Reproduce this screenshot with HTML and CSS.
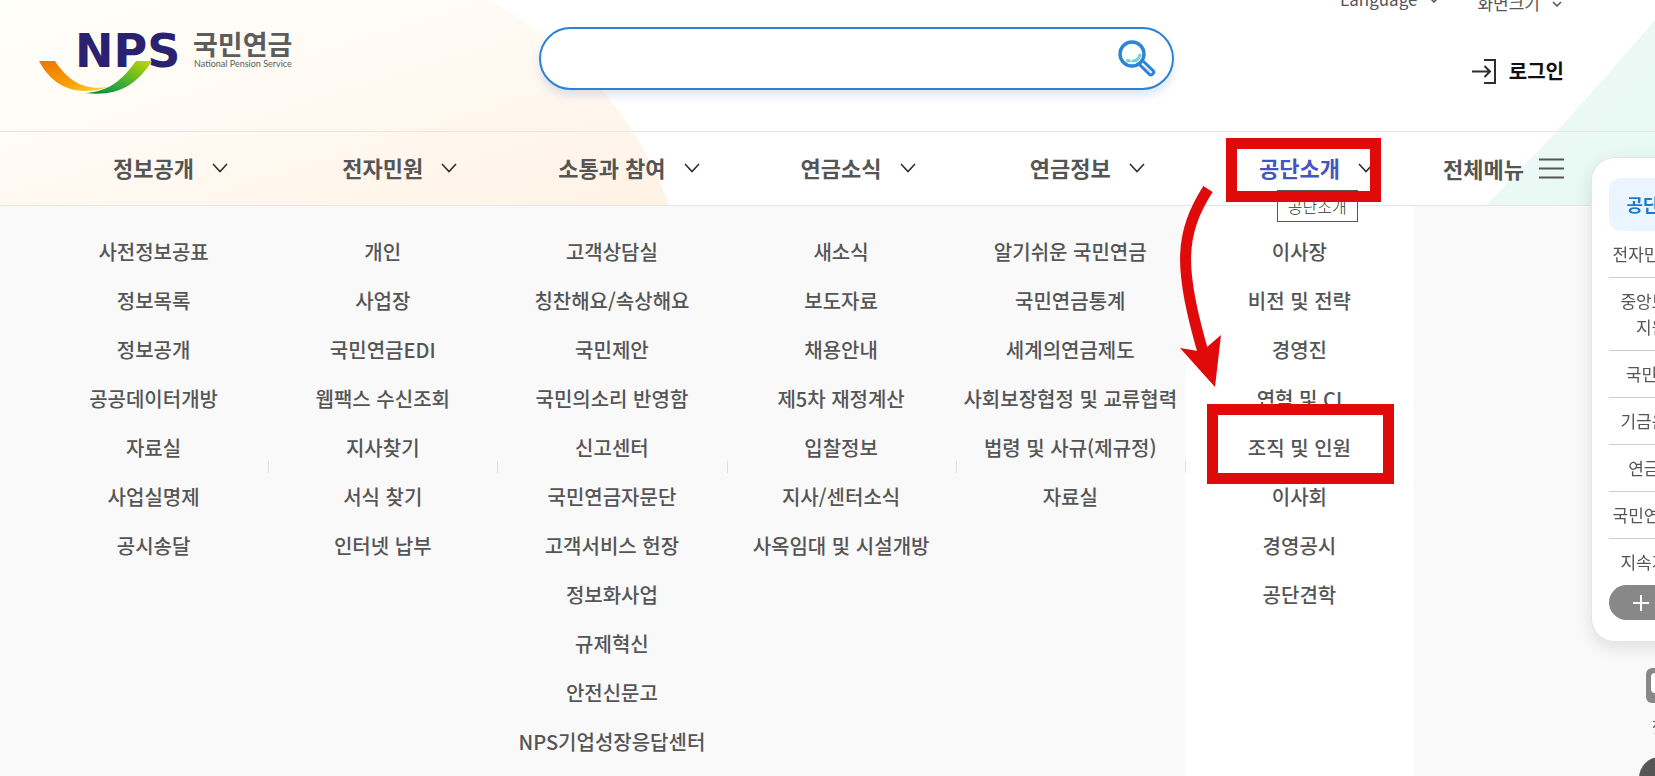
FILE: index.html
```html
<!DOCTYPE html>
<html lang="ko">
<head>
<meta charset="UTF-8" />
<meta name="viewport" content="width=device-width, initial-scale=1" />
<title>국민연금</title>
<link rel="stylesheet" href="styles.css">
</head>
<body>

<svg class="bg bg-left" width="700" height="205" viewBox="0 0 700 205" aria-hidden="true">
  <defs>
    <linearGradient id="warm" x1="0" y1="0" x2="1" y2="1">
      <stop offset="0" stop-color="#fffffa" />
      <stop offset="0.45" stop-color="#fffaf3" />
      <stop offset="1" stop-color="#fff2e5" />
    </linearGradient>
  </defs>
  <path d="M0 0H488A375 375 0 0 1 669 205H0Z" fill="url(#warm)" />
</svg>
<svg class="bg bg-right" width="170" height="205" viewBox="0 0 170 205" aria-hidden="true">
  <defs>
    <linearGradient id="mint" x1="0" y1="0" x2="1" y2="1">
      <stop offset="0" stop-color="#f3fbf8" />
      <stop offset="1" stop-color="#e4f8f1" />
    </linearGradient>
  </defs>
  <path d="M170 20Q118 80 72 131Q34 171 1 205H170Z" fill="url(#mint)" />
</svg>

<header class="header">
  <div class="header-inner">
    <a class="logo" href="#" aria-label="국민연금">
      <svg width="260" height="68" viewBox="0 0 260 68">
        <defs>
          <linearGradient id="orange" x1="0" y1="0" x2="1" y2="1">
            <stop offset="0" stop-color="#ee7203" />
            <stop offset="0.6" stop-color="#f9a100" />
            <stop offset="1" stop-color="#ffd24a" />
          </linearGradient>
          <linearGradient id="green" x1="0" y1="1" x2="1" y2="0">
            <stop offset="0" stop-color="#00863d" />
            <stop offset="0.4" stop-color="#35ab3a" />
            <stop offset="1" stop-color="#c5d800" />
          </linearGradient>
        </defs>
        <text class="logo-nps" x="36" y="40">NPS</text>
        <path d="M0 34H16C28 52 43 64 69 60C45 68 17 66 0 34Z" fill="url(#orange)" />
        <path d="M46 66C70 65 84 52 97 34H113C98 57 80 70 46 66Z" fill="url(#green)" />
        <text class="logo-ko" x="154" y="28">국민연금</text>
        <text class="logo-en" x="155" y="40">National Pension Service</text>
      </svg>
    </a>

    <form class="search" role="search">
      <input type="search" aria-label="검색어">
      <button type="submit" aria-label="검색">
        <svg width="38" height="38" viewBox="0 0 38 38" fill="none">
          <circle cx="14" cy="14" r="12" stroke="#2b84d8" stroke-width="3.4" />
          <path d="M22 15C21 18.500 18.500 20.800 15 21M11.500 21L9.500 20.500" stroke="#74d3d2" stroke-width="3" stroke-linecap="round" />
          <path d="M21.500 24.500L31.500 34.500Q33 35.500 34.300 34.300L35.300 33.200Q36.500 32 35.300 30.800L25 21" stroke="#2b84d8" stroke-width="3" stroke-linejoin="round" />
          <path d="M27 27L32.500 32.500" stroke="#b4d6f4" stroke-width="1" />
        </svg>
      </button>
    </form>

    <div class="member">
      <div class="util">
        <button class="util-lang" type="button">Language
          <svg width="10" height="6" viewBox="0 0 10 6"><path d="M1 1L5 5L9 1" /></svg>
        </button>
        <button type="button">화면크기
          <svg width="10" height="6" viewBox="0 0 10 6"><path d="M1 1L5 5L9 1" /></svg>
        </button>
      </div>
      <a class="login" href="#">
        <svg width="25" height="25" viewBox="0 0 25 25" fill="none" stroke="#2e2e2e" stroke-width="2">
          <path d="M12 1H23V24H12M0 12.500H18M12.500 7L18 12.500L12.500 18" />
        </svg>
        로그인
      </a>
    </div>
  </div>
</header>

<nav class="gnb" aria-label="주메뉴">
  <ul class="gnb-list">
    <li><a href="#">정보공개</a><svg class="chevron" width="16" height="10" viewBox="0 0 16 10"><path d="M1 1L8 8.500L15 1" /></svg></li>
    <li><a href="#">전자민원</a><svg class="chevron" width="16" height="10" viewBox="0 0 16 10"><path d="M1 1L8 8.500L15 1" /></svg></li>
    <li><a href="#">소통과 참여</a><svg class="chevron" width="16" height="10" viewBox="0 0 16 10"><path d="M1 1L8 8.500L15 1" /></svg></li>
    <li><a href="#">연금소식</a><svg class="chevron" width="16" height="10" viewBox="0 0 16 10"><path d="M1 1L8 8.500L15 1" /></svg></li>
    <li><a href="#">연금정보</a><svg class="chevron" width="16" height="10" viewBox="0 0 16 10"><path d="M1 1L8 8.500L15 1" /></svg></li>
    <li class="active">
      <a href="#">공단소개</a><svg class="chevron" width="16" height="10" viewBox="0 0 16 10"><path d="M1 1L8 8.500L15 1" /></svg>
      <span class="tooltip" role="tooltip">공단소개</span>
      <span class="mark mark-menu"></span>
    </li>
  </ul>
  <button class="all-menu" type="button">전체메뉴
    <svg width="25" height="21" viewBox="0 0 25 21"><path d="M0 1.500H25M0 10.500H25M0 19.500H25" /></svg>
  </button>
</nav>

<div class="mega">
  <ul>
    <li><a href="#">사전정보공표</a></li>
    <li><a href="#">정보목록</a></li>
    <li><a href="#">정보공개</a></li>
    <li><a href="#">공공데이터개방</a></li>
    <li><a href="#">자료실</a></li>
    <li><a href="#">사업실명제</a></li>
    <li><a href="#">공시송달</a></li>
  </ul>
  <ul>
    <li><a href="#">개인</a></li>
    <li><a href="#">사업장</a></li>
    <li><a href="#">국민연금EDI</a></li>
    <li><a href="#">웹팩스 수신조회</a></li>
    <li><a href="#">지사찾기</a></li>
    <li><a href="#">서식 찾기</a></li>
    <li><a href="#">인터넷 납부</a></li>
  </ul>
  <ul>
    <li><a href="#">고객상담실</a></li>
    <li><a href="#">칭찬해요/속상해요</a></li>
    <li><a href="#">국민제안</a></li>
    <li><a href="#">국민의소리 반영함</a></li>
    <li><a href="#">신고센터</a></li>
    <li><a href="#">국민연금자문단</a></li>
    <li><a href="#">고객서비스 헌장</a></li>
    <li><a href="#">정보화사업</a></li>
    <li><a href="#">규제혁신</a></li>
    <li><a href="#">안전신문고</a></li>
    <li><a href="#">NPS기업성장응답센터</a></li>
  </ul>
  <ul>
    <li><a href="#">새소식</a></li>
    <li><a href="#">보도자료</a></li>
    <li><a href="#">채용안내</a></li>
    <li><a href="#">제5차 재정계산</a></li>
    <li><a href="#">입찰정보</a></li>
    <li><a href="#">지사/센터소식</a></li>
    <li><a href="#">사옥임대 및 시설개방</a></li>
  </ul>
  <ul>
    <li><a href="#">알기쉬운 국민연금</a></li>
    <li><a href="#">국민연금통계</a></li>
    <li><a href="#">세계의연금제도</a></li>
    <li><a href="#">사회보장협정 및 교류협력</a></li>
    <li><a href="#">법령 및 사규(제규정)</a></li>
    <li><a href="#">자료실</a></li>
  </ul>
  <ul class="current">
    <li><a href="#">이사장</a></li>
    <li><a href="#">비전 및 전략</a></li>
    <li><a href="#">경영진</a></li>
    <li><a href="#">연혁 및 CI</a></li>
    <li><a href="#">조직 및 인원</a><span class="mark mark-item"></span></li>
    <li><a href="#">이사회</a></li>
    <li><a href="#">경영공시</a></li>
    <li><a href="#">공단견학</a></li>
  </ul>
  <svg class="arrow" width="50" height="205" viewBox="0 0 50 205" aria-hidden="true">
    <path d="M33 4C5 48 3 82 28 167" fill="none" stroke="#e10a0a" stroke-width="11" />
    <path d="M5 163L23 166L32 162L46 150L40 202Z" fill="#e10a0a" />
  </svg>
</div>

<aside class="quick">
  <div class="quick-box">
    <a class="quick-title" href="#">공단소개</a>
    <ul>
      <li><a href="#">전자민원신고</a></li>
      <li><a href="#">중앙보조기<br>지원단</a></li>
      <li><a href="#">국민 참여</a></li>
      <li><a href="#">기금운용단</a></li>
      <li><a href="#">연금정보</a></li>
      <li><a href="#">국민연금공단</a></li>
      <li><a href="#">지속가능성</a></li>
    </ul>
    <button class="quick-more" type="button" aria-label="더보기">
      <svg width="16" height="16" viewBox="0 0 16 16"><path d="M8 0V16M0 8H16" /></svg>
    </button>
  </div>
  <a class="chatbot" href="#">
    <svg width="28" height="35" viewBox="0 0 28 35">
      <rect width="28" height="35" rx="6" fill="#888" />
      <rect x="5" y="5" width="18" height="20" rx="4" fill="#fff" />
    </svg>
    챗
  </a>
  <button class="go-top" type="button" aria-label="맨 위로"></button>
</aside>

</body>
</html>
```
FILE: styles.css
```css
* {
  box-sizing: border-box;
}
body {
  margin: 0;
  min-height: 100vh;
  display: flex;
  flex-direction: column;
  position: relative;
  overflow: hidden;
  background: #fff;
  color: #555;
  font-family: "Noto Sans CJK KR", "Noto Sans", sans-serif;
  font-size: 17px;
}
ul {
  list-style: none;
  margin: 0;
  padding: 0;
}
a {
  color: inherit;
  text-decoration: none;
}
button {
  border: none;
  background: none;
  padding: 0;
  font: inherit;
  color: inherit;
  cursor: pointer;
}
svg {
  display: block;
  flex-shrink: 0;
}

/* background shapes */
.bg {
  position: absolute;
  top: 0;
  z-index: -1;
}
.bg-left {
  left: 0;
}
.bg-right {
  right: 0;
}

/* header */
.header {
  border-bottom: 1px solid #e6e6e6;
}
.header-inner {
  display: grid;
  grid-template-columns: 500fr 635fr 390fr;
  align-items: start;
  padding: 27px 91px 41px 39px;
}
.logo {
  height: 63px;
}
.logo svg {
  overflow: visible;
}
.logo-nps {
  font-family: "DejaVu Sans", sans-serif;
  font-size: 46px;
  font-weight: 700;
  fill: #2b2171;
}
.logo-ko {
  font-size: 27px;
  font-weight: 700;
  fill: #5b5c5b;
}
.logo-en {
  font-family: Lato, sans-serif;
  font-size: 9px;
  fill: #5b5c5b;
}
.search {
  display: flex;
  align-items: center;
  height: 63px;
  padding: 0 16px 0 28px;
  border: 2px solid #2b82d6;
  border-radius: 32px;
  background: #fff;
  box-shadow: 0 6px 8px rgba(43, 100, 190, 0.15);
}
.search input {
  flex: 1;
  min-width: 0;
  height: 100%;
  border: none;
  outline: none;
  background: none;
  font: inherit;
}
.member {
  display: flex;
  flex-direction: column;
  align-items: flex-end;
}
.util {
  display: flex;
  align-items: flex-start;
  gap: 38px;
  height: 30px;
  margin-top: -39px;
  padding-right: 2px;
}
.util button {
  display: flex;
  align-items: center;
  gap: 12px;
  line-height: 30px;
}
.util .util-lang {
  line-height: 22px;
}
.util svg {
  margin-top: 2px;
}
.util path {
  fill: none;
  stroke: #555;
  stroke-width: 1.5;
}
.login {
  display: flex;
  align-items: center;
  gap: 12px;
  margin-top: 38px;
  line-height: 30px;
  font-size: 20px;
  font-weight: 700;
  color: #111;
}

/* main menu */
.gnb {
  display: flex;
  position: relative;
  z-index: 2;
  padding: 0 91px 0 39px;
  border-bottom: 1px solid #e6e6e6;
  font-size: 22px;
  font-weight: 700;
  line-height: 71px;
}
.gnb-list {
  flex: 1;
  display: grid;
  grid-template-columns: repeat(6, 1fr);
}
.gnb-list li {
  display: grid;
  grid-template-columns: 1fr auto 1fr;
  align-items: center;
  position: relative;
  padding-bottom: 2px;
}
.gnb-list a {
  grid-column: 2;
}
.gnb-list .active a {
  color: #4355be;
}
.chevron {
  margin-left: 18px;
}
.chevron path {
  fill: none;
  stroke: #2e2e2e;
  stroke-width: 1.6;
}
.all-menu {
  display: flex;
  align-items: center;
  justify-content: flex-end;
  gap: 15px;
  width: 150px;
}
.all-menu path {
  stroke: #555;
  stroke-width: 2;
}
.tooltip {
  position: absolute;
  top: 58px;
  left: 92px;
  padding: 0 10px;
  border: 1px solid #555;
  background: #fff;
  font-size: 16px;
  font-weight: 300;
  line-height: 30px;
  color: #333;
}

/* sub menu */
.mega {
  flex: 1;
  display: grid;
  grid-template-columns: repeat(6, 1fr);
  position: relative;
  padding: 0 241px 0 39px;
  background: #f9f9f9;
  font-size: 20px;
  font-weight: 500;
  line-height: 49px;
  text-align: center;
  white-space: nowrap;
}
.mega ul {
  position: relative;
  padding: 21px 0 10px;
}
.mega ul:not(:last-of-type)::after {
  content: "";
  position: absolute;
  z-index: 1;
  top: 255px;
  right: -1px;
  width: 1px;
  height: 12px;
  background: #e0e0e0;
}
.mega li {
  position: relative;
}
.mega .current {
  background: #fff;
}

/* red marks */
.mark {
  position: absolute;
  border: 11px solid #e10a0a;
  pointer-events: none;
}
.mark-menu {
  inset: 6px 33px 3px 41px;
}
.mark-item {
  inset: -19px 20px -12px 22px;
}
.arrow {
  position: absolute;
  z-index: 3;
  top: -21px;
  right: 430px;
}

/* quick menu */
.quick {
  position: fixed;
  z-index: 4;
  top: 157px;
  right: -73px;
  width: 137px;
  display: flex;
  flex-direction: column;
  align-items: center;
  text-align: center;
  line-height: 26px;
}
.quick-box {
  width: 100%;
  padding: 20px 17px 21px;
  border: 1px solid #e6e6e6;
  border-radius: 24px;
  background: #fff;
  box-shadow: 0 6px 16px rgba(0, 0, 0, 0.1);
}
.quick-title {
  display: block;
  border-radius: 12px;
  background: #eaf5ff;
  font-size: 18px;
  font-weight: 700;
  line-height: 53px;
  color: #1f7acb;
}
.quick-box li {
  padding: 10px 0;
  border-bottom: 1px solid #ccc;
}
.quick-box li:last-child {
  border-bottom: none;
}
.quick-more {
  display: flex;
  align-items: center;
  width: 100%;
  height: 35px;
  padding-left: 24px;
  border-radius: 18px;
  background: #888;
}
.quick-more path {
  stroke: #fff;
  stroke-width: 2;
}
.chatbot {
  display: flex;
  flex-direction: column;
  align-items: center;
  gap: 10px;
  margin-top: 26px;
}
.go-top {
  width: 42px;
  height: 42px;
  margin-top: 18px;
  border-radius: 50%;
  background: #555;
}
```
